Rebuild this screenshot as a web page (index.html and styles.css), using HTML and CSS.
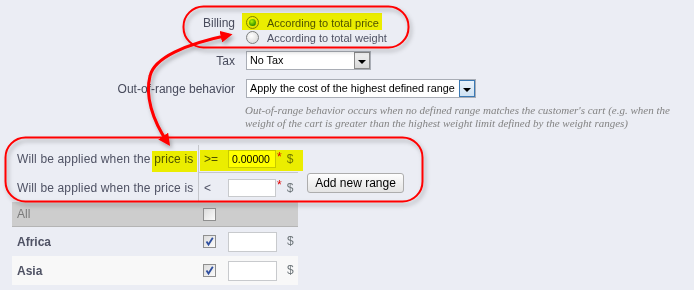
FILE: index.html
```html
<!DOCTYPE html>
<html>
<head>
<meta charset="utf-8">
<title>Carrier billing</title>
<link rel="stylesheet" href="styles.css">
</head>
<body>
<div class="page">
  <div class="form-row billing">
    <label class="lbl">Billing</label>
    <div class="radios">
      <div class="radio-item"><span class="radio checked"></span><span>According to total price</span></div>
      <div class="radio-item"><span class="radio"></span><span>According to total weight</span></div>
    </div>
  </div>
  <div class="form-row tax">
    <label class="lbl">Tax</label>
    <div class="select select-tax"><span class="sel-text">No Tax</span><span class="sel-btn"><i class="tri"></i></span></div>
  </div>
  <div class="form-row oor">
    <label class="lbl">Out-of-range behavior</label>
    <div class="select select-oor"><span class="sel-text">Apply the cost of the highest defined range</span><span class="sel-btn active"><i class="tri"></i></span></div>
  </div>
  <p class="help">Out-of-range behavior occurs when no defined range matches the customer's cart (e.g. when the<br>weight of the cart is greater than the highest weight limit defined by the weight ranges)</p>

  <div class="ranges">
    <div class="rlabel">Will be applied when the price is</div>
    <div class="rval first"><span class="op">&gt;=</span><input class="inp" type="text" value="0.00000"><span class="req">*</span><span class="cur">$</span></div>
    <div class="rbtn"></div>
    <div class="rlabel">Will be applied when the price is</div>
    <div class="rval"><span class="op">&lt;</span><input class="inp" type="text" value=""><span class="req">*</span><span class="cur">$</span></div>
    <div class="rbtn"><button class="btn" type="button">Add new range</button></div>
  </div>

  <div class="zones">
    <div class="zrow all">
      <div class="zname">All</div>
      <div class="zchk"><span class="cb"></span></div>
      <div class="zval"></div>
    </div>
    <div class="zrow">
      <div class="zname strong">Africa</div>
      <div class="zchk"><span class="cb checked"><svg viewBox="0 0 11 11" width="11" height="11"><path d="M2.5 5.5 L4.5 8.5 L8.8 1.8" fill="none" stroke="#2f4f9f" stroke-width="1.8"/></svg></span></div>
      <div class="zval"><input class="zinp" type="text" value=""><span class="cur">$</span></div>
    </div>
    <div class="zrow alt">
      <div class="zname strong">Asia</div>
      <div class="zchk"><span class="cb checked"><svg viewBox="0 0 11 11" width="11" height="11"><path d="M2.5 5.5 L4.5 8.5 L8.8 1.8" fill="none" stroke="#2f4f9f" stroke-width="1.8"/></svg></span></div>
      <div class="zval"><input class="zinp" type="text" value=""><span class="cur">$</span></div>
    </div>
  </div>

  <div class="hl hl-billing"></div>
  <div class="hl hl-price"></div>
  <div class="hl hl-cell"></div>

  <svg class="annot" width="694" height="290" viewBox="0 0 694 290">
    <defs>
      <filter id="sh" x="-10%" y="-20%" width="130%" height="150%">
        <feDropShadow dx="2" dy="3" stdDeviation="2" flood-color="#000" flood-opacity="0.3"/>
      </filter>
      <marker id="ah" viewBox="0 0 10 10" refX="7" refY="5" markerWidth="4" markerHeight="4" orient="auto-start-reverse" markerUnits="strokeWidth">
        <path d="M0,0 L10,5 L0,10 z" fill="#f00"/>
      </marker>
    </defs>
    <g filter="url(#sh)" fill="none" stroke="#f00" stroke-width="2">
      <rect x="183.5" y="6.5" width="225" height="41" rx="20"/>
      <rect x="5.5" y="137.5" width="417" height="64" rx="20"/>
      <path d="M168,143 C152,120 145,95 150,76 C154,58 185,44 229,35" stroke-width="3" marker-start="url(#ah)" marker-end="url(#ah)"/>
    </g>
  </svg>
</div>
</body>
</html>
```

FILE: styles.css
```css
html, body {
  margin: 0;
  padding: 0;
}
body {
  background: #ebedf4;
}
.page {
  position: relative;
  width: 694px;
  height: 290px;
  overflow: hidden;
  background: #ebedf4;
  isolation: isolate;
  font-family: "Liberation Sans", Arial, sans-serif;
  font-size: 12px;
  color: #4f5264;
  padding-top: 15px;
  box-sizing: border-box;
}

.form-row {
  display: flex;
  gap: 11px;
}
.lbl {
  width: 235px;
  flex: none;
  text-align: right;
  color: #484b5c;
}

/* Billing */
.billing .lbl {
  line-height: 15px;
  padding-top: 1px;
}
.radio-item {
  display: flex;
  align-items: center;
  height: 15px;
  font-size: 11px;
  white-space: nowrap;
}
.radio {
  position: relative;
  width: 13px;
  height: 13px;
  box-sizing: border-box;
  border-radius: 50%;
  border: 1px solid #7e8080;
  background: radial-gradient(circle at 40% 35%, #ffffff, #d2d2d2);
  margin-right: 8px;
  flex: none;
}
.radio.checked::after {
  content: "";
  position: absolute;
  left: 2px;
  top: 2px;
  width: 7px;
  height: 7px;
  border-radius: 50%;
  background: radial-gradient(circle at 40% 35%, #b8f57a, #2f8f12 70%, #1d5f0a);
}

/* Selects */
.tax {
  margin-top: 6px;
  align-items: center;
}
.oor {
  margin-top: 9px;
  align-items: center;
}
.select {
  display: flex;
  height: 19px;
  box-sizing: border-box;
  border: 1px solid #a9adb5;
  background: #fff;
  color: #000;
}
.select-tax { width: 125px; }
.select-oor { width: 230px; }
.sel-text {
  flex: 1;
  min-width: 0;
  padding-left: 3px;
  font-size: 10.8px;
  line-height: 17px;
  white-space: nowrap;
  overflow: hidden;
}
.sel-btn {
  flex: none;
  width: 16px;
  height: 17px;
  box-sizing: border-box;
  border: 1px solid #8a8a8a;
  background: linear-gradient(#f2f2f2, #d8d8d8);
  display: flex;
  align-items: center;
  justify-content: center;
}
.sel-btn.active {
  border-color: #3b79b4;
  background: linear-gradient(#eaf3fb, #cfe2f3);
}
.tri {
  display: block;
  width: 0;
  height: 0;
  margin-top: 3px;
  border-top: 4px solid #000;
  border-left: 4px solid transparent;
  border-right: 4px solid transparent;
}

/* Help */
.help {
  margin: 6px 0 0 245px;
  font-family: "Liberation Serif", "Times New Roman", serif;
  font-style: italic;
  font-size: 11px;
  line-height: 12.6px;
  color: #838383;
  white-space: nowrap;
}

/* Ranges */
.ranges {
  display: grid;
  grid-template-columns: 186px 100px 130px;
  grid-template-rows: 28px 29px;
  margin: 16px 0 0 12px;
}
.rlabel {
  display: flex;
  align-items: center;
  padding-left: 5px;
  white-space: nowrap;
  letter-spacing: 0.15px;
}
.rval {
  display: flex;
  align-items: center;
  border-left: 1px solid #c5c7cc;
  padding-left: 5px;
}
.rval.first {
  border-bottom: 1px solid #c5c7cc;
}
.op {
  width: 24px;
  flex: none;
}
.inp {
  width: 48px;
  height: 18px;
  box-sizing: border-box;
  margin: 0;
  padding: 0 3px;
  border: 1px solid #c8cacd;
  background: #fff;
  font-family: "Liberation Sans", Arial, sans-serif;
  font-size: 10.5px;
  color: #000;
  outline: none;
}
.req {
  align-self: flex-start;
  margin-top: 6px;
  margin-left: 1px;
  color: #e00000;
  font-size: 12px;
  line-height: 12px;
}
.cur {
  margin-left: 5px;
  color: #6e767a;
}
.rbtn {
  padding-left: 9px;
}
.btn {
  display: block;
  width: 97px;
  height: 20px;
  padding: 0;
  margin: 0;
  border: 1px solid #adadad;
  border-radius: 3px;
  background: linear-gradient(#fefefe, #e4e4e4);
  font-family: "Liberation Sans", Arial, sans-serif;
  font-size: 12px;
  color: #000;
}

/* Zones */
.zones {
  margin-left: 12px;
  width: 286px;
}
.zrow {
  display: grid;
  grid-template-columns: 186px 24px 76px;
  height: 29px;
  align-items: center;
}
.zrow.all {
  height: 24px;
  background: #cdcdcd;
  border-bottom: 1px solid #b4b4b4;
}
.zrow.alt {
  background: #f8f8f8;
}
.zname {
  padding-left: 5px;
}
.zrow.all .zname {
  color: #7a7a7a;
}
.zname.strong {
  font-weight: bold;
}
.zchk {
  padding-left: 5px;
  display: flex;
}
.cb {
  width: 13px;
  height: 13px;
  box-sizing: border-box;
  border: 1px solid #8f8f8f;
  background: linear-gradient(135deg, #dcdcdc, #fbfbfb);
  display: flex;
  align-items: center;
  justify-content: center;
}
.zval {
  display: flex;
  align-items: center;
  padding-left: 6px;
}
.zinp {
  width: 49px;
  height: 20px;
  box-sizing: border-box;
  margin: 0;
  border: 1px solid #c8cacd;
  background: #fff;
  outline: none;
}
.zval .cur {
  margin-left: 10px;
  align-self: flex-start;
  margin-top: 2px;
}

/* Annotation overlays */
.hl {
  position: absolute;
  background: #ffff00;
  mix-blend-mode: multiply;
}
.hl-billing { left: 242px; top: 13px; width: 140px; height: 17px; }
.hl-price { left: 152px; top: 151px; width: 45px; height: 21px; }
.hl-cell { left: 200px; top: 150px; width: 103px; height: 21px; }

.annot {
  position: absolute;
  left: 0;
  top: 0;
  pointer-events: none;
}
```
